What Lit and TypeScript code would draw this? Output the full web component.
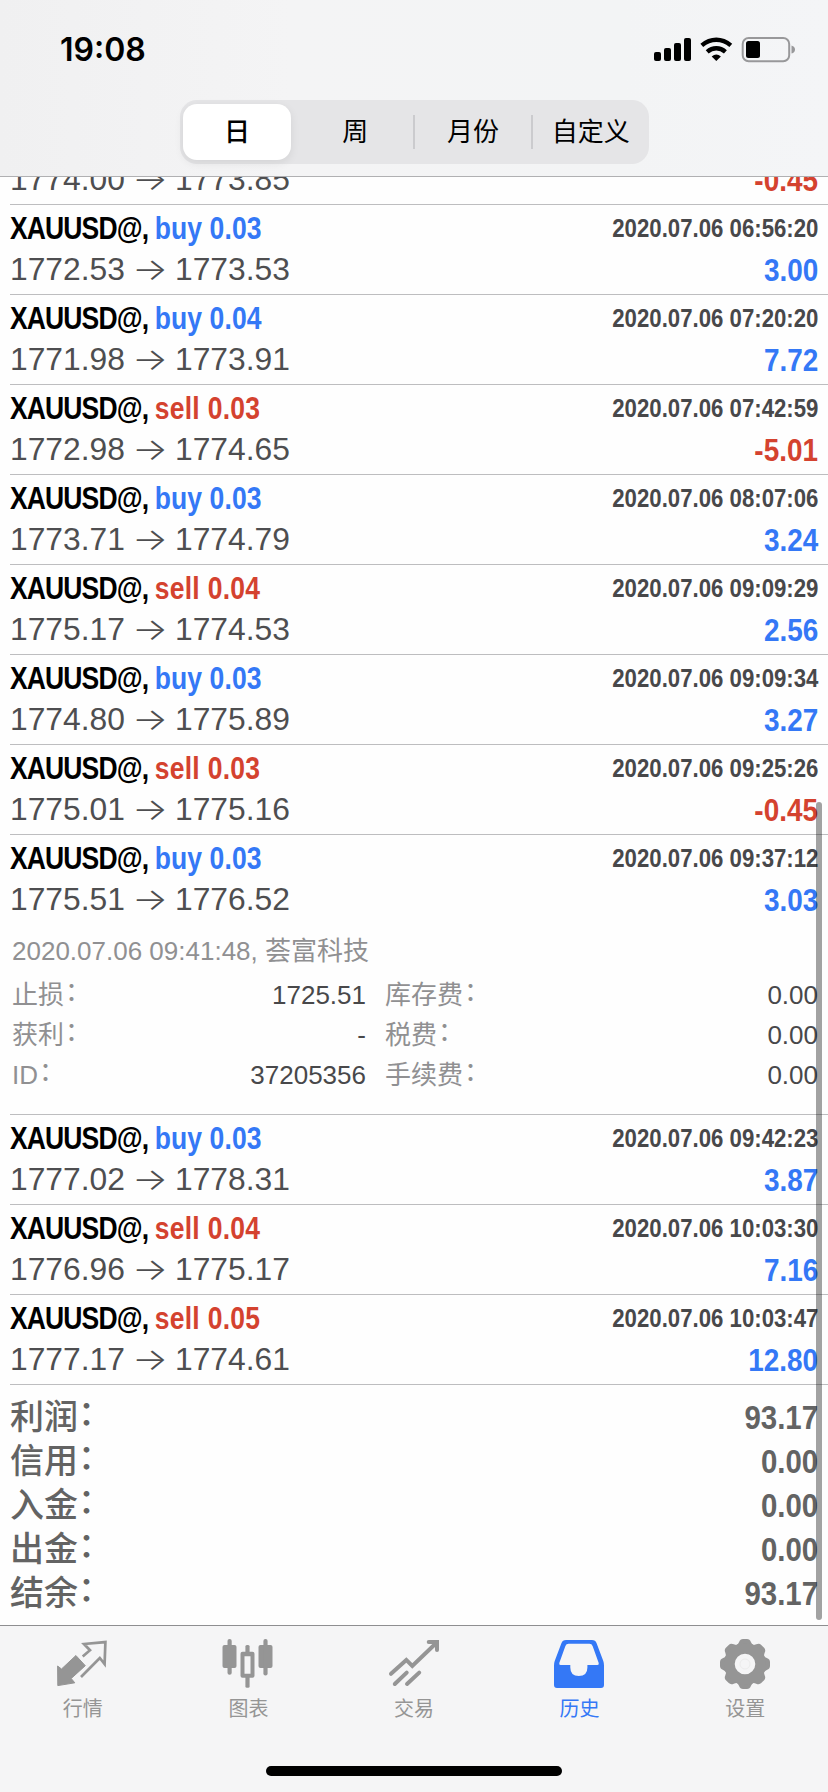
import { LitElement, html, css, svg } from "lit";

type Side = "buy" | "sell";
interface Deal {
  side: Side;
  lots: string;
  open: string;
  close: string;
  time: string;
  profit: string;
  details?: boolean;
  partial?: boolean;
}

const deals: Deal[] = [
  { side: "sell", lots: "", open: "1774.00", close: "1773.85", time: "", profit: "-0.45", partial: true },
  { side: "buy", lots: "0.03", open: "1772.53", close: "1773.53", time: "2020.07.06 06:56:20", profit: "3.00" },
  { side: "buy", lots: "0.04", open: "1771.98", close: "1773.91", time: "2020.07.06 07:20:20", profit: "7.72" },
  { side: "sell", lots: "0.03", open: "1772.98", close: "1774.65", time: "2020.07.06 07:42:59", profit: "-5.01" },
  { side: "buy", lots: "0.03", open: "1773.71", close: "1774.79", time: "2020.07.06 08:07:06", profit: "3.24" },
  { side: "sell", lots: "0.04", open: "1775.17", close: "1774.53", time: "2020.07.06 09:09:29", profit: "2.56" },
  { side: "buy", lots: "0.03", open: "1774.80", close: "1775.89", time: "2020.07.06 09:09:34", profit: "3.27" },
  { side: "sell", lots: "0.03", open: "1775.01", close: "1775.16", time: "2020.07.06 09:25:26", profit: "-0.45" },
  { side: "buy", lots: "0.03", open: "1775.51", close: "1776.52", time: "2020.07.06 09:37:12", profit: "3.03", details: true },
  { side: "buy", lots: "0.03", open: "1777.02", close: "1778.31", time: "2020.07.06 09:42:23", profit: "3.87" },
  { side: "sell", lots: "0.04", open: "1776.96", close: "1775.17", time: "2020.07.06 10:03:30", profit: "7.16" },
  { side: "sell", lots: "0.05", open: "1777.17", close: "1774.61", time: "2020.07.06 10:03:47", profit: "12.80" },
];

class DealRow extends LitElement {
  static properties = { deal: { attribute: false } };
  declare deal: Deal;

  static styles = css`
    :host { display: block; }
    .row { margin-left: 10px; border-top: 1px solid #bdbdbf; padding-top: 3px; box-sizing: border-box; height: 90px; }
    .row.open { height: 280px; }
    .row.partial { height: 46px; border-top: 0; padding-top: 0; }
    .line { display: flex; justify-content: space-between; padding-right: 10px; white-space: pre; }
    .first { height: 40px; line-height: 40px; font-weight: 700; }
    .second { height: 42px; line-height: 42px; }
    .title { font-size: 32px; transform: scaleX(0.828); transform-origin: left; }
    .symbol { color: #000; letter-spacing: -1.05px; }
    .buy, .plus { color: #3478f6; }
    .sell, .minus { color: #d4422f; }
    .buy { letter-spacing: 0.15px; }
    .sell { letter-spacing: 0.35px; }
    .time { font-size: 26px; color: #48484a; transform: scaleX(0.854); transform-origin: right; }
    .prices { font-size: 31.8px; color: #4e4e50; display: flex; }
    .arrow { width: 50px; text-align: center; font-family: Inter, sans-serif; font-weight: 300; font-size: 30px; transform: scaleX(1.26); }
    .profit { font-size: 32px; line-height: 45px; font-weight: 700; transform: scaleX(0.872); transform-origin: right; }
    .details { padding: 11px 10px 0 2px; font-size: 26px; color: #909092; line-height: 40px; }
    .note { height: 44px; white-space: pre; }
    .grid { display: grid; grid-template-columns: 354px 433px; column-gap: 19px; grid-auto-rows: 40px; }
    .cell { display: flex; justify-content: space-between; }
    .cell b { font-weight: 400; color: #48484a; }
    .colon { display: inline-block; line-height: 0; vertical-align: 3px; margin-left: 1px; }
  `;

  cell(label: string, value: string) {
    return html`<div class="cell"><span>${label}<span class="colon">：</span></span><b>${value}</b></div>`;
  }

  render() {
    const d = this.deal;
    return html`<div class="row ${d.details ? "open" : ""} ${d.partial ? "partial" : ""}">
      ${d.partial
        ? ""
        : html`<div class="line first">
            <span class="title"><span class="symbol">XAUUSD@, </span><span class=${d.side}>${d.side} ${d.lots}</span></span>
            <span class="time">${d.time}</span>
          </div>`}
      <div class="line second">
        <span class="prices"><span>${d.open}</span><span class="arrow">→</span><span>${d.close}</span></span>
        <span class="profit ${d.profit.startsWith("-") ? "minus" : "plus"}">${d.profit}</span>
      </div>
      ${d.details
        ? html`<div class="details">
            <div class="note">2020.07.06 09:41:48, 荟富科技</div>
            <div class="grid">
              ${this.cell("止损", "1725.51")}${this.cell("库存费", "0.00")}
              ${this.cell("获利", "-")}${this.cell("税费", "0.00")}
              ${this.cell("ID", "37205356")}${this.cell("手续费", "0.00")}
            </div>
          </div>`
        : ""}
    </div>`;
  }
}
customElements.define("deal-row", DealRow);

const tooth = "M15.5 7 Q18 5.800 19 3.200 Q20.200 0 23 0 H27 Q29.800 0 31 3.200 Q32 5.800 34.500 7 Z";
const gear = svg`
  <g fill="currentColor">
    ${[0, 45, 90, 135, 180, 225, 270, 315].map((a) => svg`<path d=${tooth} transform="rotate(${a} 25 25)"/>`)}
  </g>
  <circle cx="25" cy="25" r="15.6" fill="none" stroke="currentColor" stroke-width="10.6"/>
  <circle cx="25" cy="25" r="5" fill="none" stroke="#ececec" stroke-width="1"/>`;

const tabs = [
  {
    label: "行情",
    icon: svg`<path fill="currentColor" stroke="currentColor" stroke-width="1" stroke-linejoin="round" d="M-.4 27 L3.500 30 L17.900 16.500 L27.300 26.700 L13.200 39.500 L16.800 43.800 L-.2 46.600 Z"/>
      <path fill="none" stroke="currentColor" stroke-width="2.7" d="M24.700 17.600 L32 11.200 L26 5 L47.400 3.100 L46.600 25 L41.800 19 L23 38"/>`,
  },
  {
    label: "图表",
    icon: svg`<g fill="currentColor" transform="translate(-.5 0)"><rect x="0" y="6" width="14" height="23" rx="2"/><rect x="5" y="0" width="4.2" height="35.7" rx="2"/>
      <rect x="36" y="6" width="14" height="23" rx="2"/><rect x="40.9" y="0" width="4.2" height="36.5" rx="2"/>
      <rect x="22.9" y="6" width="4.2" height="9" rx="1.5"/><rect x="22.9" y="36" width="4.2" height="12.8" rx="1.5"/>
      <path fill-rule="evenodd" d="M20 12.7h10a2 2 0 0 1 2 2v22a2 2 0 0 1-2 2H20a2 2 0 0 1-2-2v-22a2 2 0 0 1 2-2zM22 17.3v17.4h6V17.3z"/></g>`,
  },
  {
    label: "交易",
    icon: svg`<g fill="none" stroke="currentColor" stroke-width="4" stroke-linecap="round">
      <path d="M2 34.8 L17.3 20.9 L23.3 27 L47 4.2"/><path d="M39.7 3 H48 V11" /><path d="M17.7 33.6 L5.8 45"/><path d="M30.2 33.6 L18 45"/></g>`,
  },
  {
    label: "历史",
    icon: svg`<path transform="translate(-1 0)" fill="currentColor" fill-rule="evenodd" d="M12 1H38Q41.4 1 42.6 4.2L49.3 22Q50 24 50 26.500V46Q50 49 47 49H3Q0 49 0 46V26.500Q0 24 .7 22L7.400 4.200Q8.600 1 12 1ZM14.500 4.800Q12.200 4.800 11.400 7L5.300 24Q4.800 26 6.500 26H16.300V28.500Q16.300 37 24.800 37Q33.400 37 33.400 28.500V26H43.500Q45.200 26 44.700 24L38.600 7Q37.800 4.800 35.500 4.800Z"/>`,
  },
  { label: "设置", icon: gear },
];

const totals = [
  ["利润", "93.17"],
  ["信用", "0.00"],
  ["入金", "0.00"],
  ["出金", "0.00"],
  ["结余", "93.17"],
];

class AppRoot extends LitElement {
  static styles = css`
    :host {
      display: flex; flex-direction: column; position: relative; width: 828px; height: 1792px; overflow: hidden;
      background: #fefefe; font-family: "Liberation Sans", "Noto Sans CJK SC", sans-serif;
    }
    .header { flex: none; height: 177px; box-sizing: border-box; border-bottom: 1px solid #b0b0b2; background: linear-gradient(90deg, #f0f0f1, #f4f4f5 35%, #f3f4f5 75%, #f4f5f7); }
    .status { height: 100px; display: flex; justify-content: space-between; align-items: center; padding: 0 32px 0 60px; box-sizing: border-box; }
    .clock { font: 600 32px/40px Inter, sans-serif; color: #000; }
    .indicators { display: block; }
    .segments { display: flex; align-items: center; width: 469px; height: 64px; margin-left: 180px; background: #e5e5e7; border-radius: 17px; font-size: 26px; color: #000; }
    .segment { flex: 1; text-align: center; line-height: 40px; }
    .segment.active { flex: none; width: 108px; margin: 0 6px 0 3px; height: 56px; line-height: 56px; border-radius: 14px; background: #fff; font-weight: 500; box-shadow: 0 3px 10px rgba(0, 0, 0, 0.08); }
    .divider { width: 1.5px; height: 34px; background: #cbcbce; }
    .list { flex: none; height: 1448px; overflow: hidden; }
    .rows { margin-top: -19px; }
    .totals { margin-left: 10px; padding: 10px 10px 0 0; border-top: 1px solid #bdbdbf; color: #636363; font-weight: 700; font-size: 34px; }
    .total { display: flex; justify-content: space-between; height: 44px; line-height: 44px; }
    .total .label { font-weight: 500; }
    .total .colon { display: inline-block; line-height: 0; vertical-align: 4px; }
    .total .amount { transform: scaleX(0.865); transform-origin: right; }
    .scrollbar { position: absolute; left: 816px; top: 802px; width: 6px; height: 818px; border-radius: 3px; background: rgba(0, 0, 0, 0.36); }
    .tabbar { flex: 1; border-top: 1px solid #8e8e90; background: #f5f5f6; display: flex; flex-direction: column; align-items: center; }
    .tabs { display: flex; width: 828px; height: 140px; }
    .tab { flex: 1; display: flex; flex-direction: column; align-items: center; padding-top: 13px; color: #959595; font-size: 20px; line-height: 40px; }
    .tab.active { color: #3478f6; }
    .tab svg { display: block; overflow: visible; }
    .home { width: 296px; height: 10px; border-radius: 5px; background: #000; }
  `;

  render() {
    return html`
      <div class="header">
        <div class="status">
          <span class="clock">19:08</span>
          <svg class="indicators" width="142" height="26" viewBox="0 0 142 26">
            <rect x="0" y="15" width="7" height="9" rx="2"/><rect x="10" y="11" width="7" height="13" rx="2"/>
            <rect x="20" y="6" width="7" height="18" rx="2"/><rect x="30" y="1" width="7" height="23" rx="2"/>
            <g fill="none" stroke="#000" stroke-width="4.400"><path d="M47.800 8.400 Q54.500 2.800 62.300 2.800 T76.800 8.400"/><path d="M53.200 14.800 Q57.300 11.200 62.300 11.200 T71.400 14.800"/></g>
            <path d="M57.700 19.600 Q62.300 15.600 66.900 19.600 L62.300 24 Z"/>
            <rect x="88.700" y="1" width="46.500" height="23.300" rx="6" fill="none" stroke="#98989a" stroke-width="2"/>
            <rect x="92" y="4" width="14" height="17" rx="2.500"/>
            <path d="M137.500 8.500 Q141 9.500 141 12.500 T137.500 16.500 Z" fill="#98989a"/>
          </svg>
        </div>
        <div class="segments">
          <span class="segment active">日</span>
          <span class="segment">周</span><span class="divider"></span>
          <span class="segment">月份</span><span class="divider"></span>
          <span class="segment">自定义</span>
        </div>
      </div>
      <div class="list">
        <div class="rows">${deals.map((d) => html`<deal-row .deal=${d}></deal-row>`)}</div>
        <div class="totals">
          ${totals.map(([l, v]) => html`<div class="total"><span class="label">${l}<span class="colon">：</span></span><span class="amount">${v}</span></div>`)}
        </div>
      </div>
      <div class="scrollbar"></div>
      <div class="tabbar">
        <div class="tabs">
          ${tabs.map((t) => html`<div class="tab ${t.label === "历史" ? "active" : ""}">
            <svg width="50" height="50" viewBox="0 0 50 50">${t.icon}</svg><span>${t.label}</span>
          </div>`)}
        </div>
        <div class="home"></div>
      </div>
    `;
  }
}
customElements.define("app-root", AppRoot);
